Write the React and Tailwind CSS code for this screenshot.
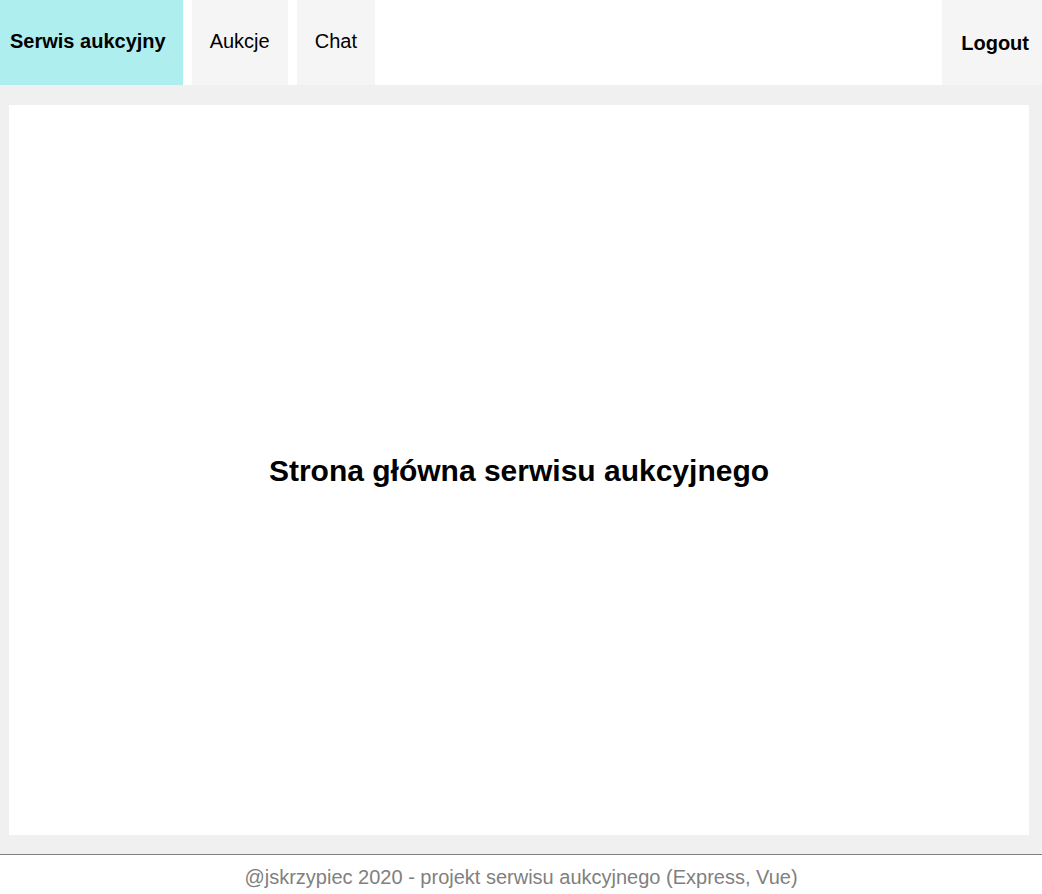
import React from 'react';

const App = () => {
  return (
    <div className="min-h-screen bg-white font-['Liberation_Sans',Arial,sans-serif] text-black">
      {/* Top navigation */}
      <nav className="flex h-[85px] items-stretch bg-white">
        <a className="flex items-center bg-[#afeeee] pb-[3px] pl-[10px] pr-[17px] text-[20px] font-bold">Serwis aukcyjny</a>
        <a className="ml-[9px] flex items-center bg-[#f5f5f5] pb-[3px] px-[18px] text-[20px]">Aukcje</a>
        <a className="ml-[9px] flex items-center bg-[#f5f5f5] pb-[3px] px-[18px] text-[20px]">Chat</a>
        <div className="flex-1" />
        <a className="flex items-center bg-[#f5f5f5] pl-[19px] pr-[13px] text-[20px] font-bold">Logout</a>
      </nav>

      {/* Content */}
      <main className="bg-[#f0f0f0] pl-[9px] pr-[13px] pt-5 pb-[19px]">
        <div className="flex h-[730px] items-center justify-center bg-white">
          <h1 className="text-[30px] font-bold">Strona główna serwisu aukcyjnego</h1>
        </div>
      </main>

      <footer className="border-t border-[#808080] pt-[11px] pb-3 text-center text-[20px] leading-[23px] text-[#808080]">
        @jskrzypiec 2020 - projekt serwisu aukcyjnego (Express, Vue)
      </footer>
    </div>
  );
};

export default App;
